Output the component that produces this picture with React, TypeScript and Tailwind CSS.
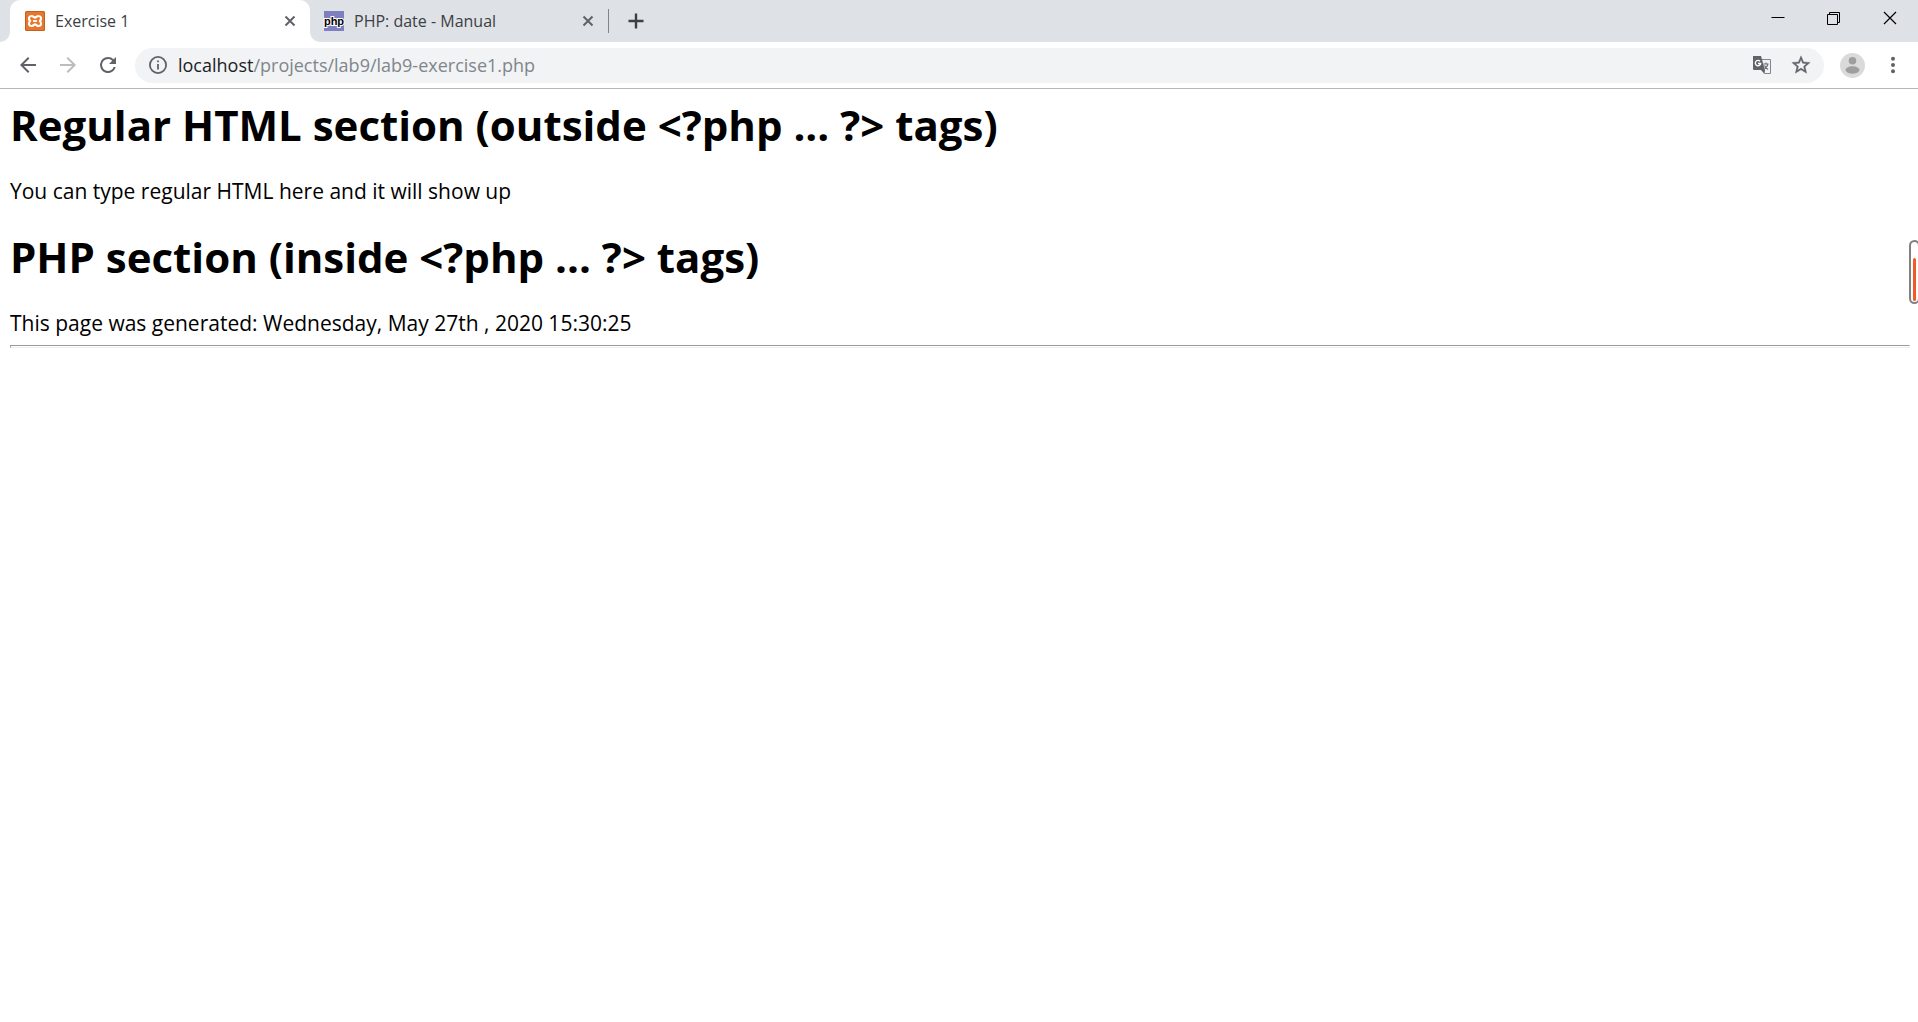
import type { ReactNode } from "react";

type IconProps = { className: string; children: ReactNode; box?: string };

function Icon({ className, children, box = "0 0 24 24" }: IconProps) {
  return (
    <svg viewBox={box} className={className} fill="currentColor" aria-hidden="true">
      {children}
    </svg>
  );
}

function IconButton({ label, className, children }: { label: string; className: string; children: ReactNode }) {
  return (
    <button type="button" aria-label={label} className={`flex shrink-0 items-center justify-center ${className}`}>
      {children}
    </button>
  );
}

function XamppIcon() {
  return (
    <svg viewBox="0 0 20 20" className="size-5 shrink-0" aria-hidden="true">
      <rect width="20" height="20" rx="1.5" fill="#c4601f" />
      <rect x="1" y="1" width="18" height="18" rx="1" fill="#e8762c" />
      <path
        d="M5.200 10C3 8 3.800 5 6.500 5c1.800 0 2.300 1.600 3.500 1.600S11.700 5 13.500 5c2.700 0 3.500 3 1.300 5 2.200 2 1.400 5-1.300 5-1.800 0-2.300-1.600-3.500-1.600S8.300 15 6.500 15C3.800 15 3 12 5.200 10Z"
        fill="none"
        stroke="#fff"
        strokeWidth="2.200"
        strokeLinejoin="round"
      />
      <path d="M8 10h4" stroke="#fff" strokeWidth="1.800" />
    </svg>
  );
}

function PhpIcon() {
  return (
    <svg viewBox="0 0 20 20" className="size-5 shrink-0 overflow-visible" aria-hidden="true">
      <rect width="20" height="20" fill="#7f7fbf" />
      <text
        x="10"
        y="14"
        textAnchor="middle"
        className="font-['Liberation_Sans'] text-[11px] font-bold"
        fill="#000"
        stroke="#fff"
        strokeWidth="2"
        paintOrder="stroke"
      >
        php
      </text>
    </svg>
  );
}

function CloseIcon() {
  return (
    <Icon className="size-4" box="0 0 16 16">
      <path d="M3.500 3.500 12.500 12.500M12.500 3.500 3.500 12.500" stroke="currentColor" strokeWidth="2" />
    </Icon>
  );
}

function TabStrip() {
  return (
    <header className="flex h-[42px] bg-[#dee1e6] text-[#3c4043]">
      <div className="flex w-[10px] bg-white">
        <div className="flex-1 rounded-br-[10px] bg-[#dee1e6]" />
      </div>
      <div role="tablist" aria-label="Open tabs" className="flex">
        <div className="flex w-[300px] items-center rounded-t-[10px] bg-white pr-3 pl-[15px]">
          <button type="button" role="tab" aria-selected="true" className="flex flex-1 items-center gap-[10px] text-base">
            <XamppIcon />
            Exercise 1
          </button>
          <IconButton label="Close Exercise 1" className="size-4 text-[#5f6368]">
            <CloseIcon />
          </IconButton>
        </div>
        <div className="flex w-[298px] bg-white">
          <div className="flex flex-1 items-center rounded-bl-[10px] bg-[#dee1e6] pr-3 pl-[14px]">
            <button type="button" role="tab" aria-selected="false" className="flex flex-1 items-center gap-[10px] text-base">
              <PhpIcon />
              PHP: date - Manual
            </button>
            <IconButton label="Close PHP: date - Manual" className="size-4 text-[#5f6368]">
              <CloseIcon />
            </IconButton>
          </div>
        </div>
      </div>
      <div className="my-[9px] w-px bg-[#808488]" />
      <IconButton label="New tab" className="ml-[15px] w-6">
        <Icon className="size-6">
          <path d="M12 4.500v15M4.500 12h15" stroke="currentColor" strokeWidth="2.400" />
        </Icon>
      </IconButton>
      <div className="flex-1" />
      <IconButton label="Minimize" className="h-9 w-14 text-black">
        <Icon className="size-4" box="0 0 16 16">
          <path d="M1.500 7h13v1h-13z" />
        </Icon>
      </IconButton>
      <IconButton label="Restore" className="h-9 w-14 text-black">
        <Icon className="size-4" box="0 0 16 16">
          <path d="M1.500 4.500h10v10h-10zM3.500 4.500v-2h10v10h-2" fill="none" stroke="currentColor" />
        </Icon>
      </IconButton>
      <IconButton label="Close window" className="h-9 w-14 text-black">
        <Icon className="size-4" box="0 0 16 16">
          <path d="m2 2 12 12M14 2 2 14" stroke="currentColor" strokeWidth="1.200" />
        </Icon>
      </IconButton>
    </header>
  );
}

function Toolbar() {
  return (
    <nav aria-label="Browser toolbar" className="flex h-[47px] items-center border-b border-[#b6b6b6] bg-white pr-[13px] pl-4 text-[#5f6368]">
      <IconButton label="Back" className="size-6">
        <Icon className="size-6">
          <path d="M20 11H7.830l5.590-5.590L12 4l-8 8 8 8 1.410-1.410L7.830 13H20z" />
        </Icon>
      </IconButton>
      <IconButton label="Forward" className="ml-4 size-6 text-[#babcbe]">
        <Icon className="size-6">
          <path d="m12 4-1.410 1.410L16.170 11H4v2h12.170l-5.580 5.590L12 20l8-8z" />
        </Icon>
      </IconButton>
      <IconButton label="Reload" className="ml-4 size-6">
        <Icon className="size-6">
          <path d="M17.650 6.350A7.958 7.958 0 0 0 12 4a8 8 0 1 0 7.730 10h-2.080A6 6 0 1 1 12 6c1.660 0 3.140.69 4.220 1.780L13 11h7V4z" />
        </Icon>
      </IconButton>
      <div className="ml-[15px] flex h-[35px] flex-1 items-center rounded-full bg-[#f1f3f4] pr-3 pl-[14px]">
        <IconButton label="Site information" className="size-[18px]">
          <Icon className="size-[18px]" box="2 2 20 20">
            <path d="M11 7h2v2h-2zm0 4h2v6h-2zm1-9a10 10 0 1 0 0 20 10 10 0 0 0 0-20m0 18a8 8 0 1 1 0-16 8 8 0 0 1 0 16" />
          </Icon>
        </IconButton>
        <a href="#address" className="ml-[11px] flex-1 text-[18px] text-[#80868b]">
          <span className="text-[#202124]">localhost</span>/projects/lab9/lab9-exercise1.php
        </a>
        <IconButton label="Translate this page" className="size-5">
          <svg viewBox="0 0 20 20" className="size-5" aria-hidden="true">
            <path d="M8 4.500h10.500v14h-6" fill="none" stroke="#80868b" />
            <path d="M1 1h8l4 14H2a1 1 0 0 1-1-1z" fill="#5f6368" />
            <path d="m9 15 3.500 4 .5-4z" fill="#5f6368" />
            <path d="M8 6.200A2.700 2.700 0 1 0 8.700 8.500H6" fill="none" stroke="#fff" strokeWidth="1.400" />
            <path d="M11.500 9h5M14 7.500V9m2 0c-.5 2-1.800 3.500-3.200 4.500M12.500 10.500c.8 1.700 2 2.900 3.500 4" fill="none" stroke="#6b6f73" strokeWidth="1.100" />
          </svg>
        </IconButton>
        <IconButton label="Bookmark this page" className="ml-[18px] size-[22px]">
          <Icon className="size-[22px]">
            <path
              d="m22 9.240-7.190-.62L12 2 9.190 8.630 2 9.240l5.460 4.730L5.820 21 12 17.270 18.180 21l-1.630-7.030zM12 15.400l-3.760 2.270 1-4.280-3.320-2.880 4.380-.38L12 6.100l1.710 4.040 4.380.38-3.320 2.880 1 4.280z"
              stroke="currentColor"
              strokeWidth="0.400"
            />
          </Icon>
        </IconButton>
      </div>
      <IconButton label="Profile" className="ml-4 size-[25px]">
        <svg viewBox="0 0 25 25" className="size-[25px]" aria-hidden="true">
          <circle cx="12.500" cy="12.500" r="12.500" fill="#dadada" />
          <circle cx="12.500" cy="7.800" r="3.800" fill="#9e9e9e" />
          <path d="M5.500 17.500c0-2.500 3-4.200 7-4.200s7 1.700 7 4.200c-1.500 2.200-4 3.300-7 3.300s-5.500-1.100-7-3.300" fill="#9e9e9e" />
        </svg>
      </IconButton>
      <IconButton label="Menu" className="ml-4 size-6">
        <Icon className="size-6">
          <circle cx="12" cy="5.700" r="2" />
          <circle cx="12" cy="12" r="2" />
          <circle cx="12" cy="18.300" r="2" />
        </Icon>
      </IconButton>
    </nav>
  );
}

function LevelGauge() {
  return (
    <div className="absolute top-[151px] right-0 h-16 w-[9px] overflow-hidden">
      <div className="flex h-16 w-[11px] items-end rounded-full border-2 border-[#808080] bg-white px-[2px] pb-px">
        <div className="h-[43px] w-full rounded-full bg-[#f05a28]" />
      </div>
    </div>
  );
}

export default function App() {
  return (
    <div className="min-h-screen bg-white font-['Open_Sans',sans-serif]">
      <TabStrip />
      <Toolbar />
      <main className="relative pt-2 pr-2 pl-[10px] text-black">
        <h1 className="text-[42px] leading-[56px] font-bold">Regular HTML section (outside &lt;?php ... ?&gt; tags)</h1>
        <p className="mt-6 text-[21px] leading-7">You can type regular HTML here and it will show up</p>
        <h1 className="mt-6 text-[42px] leading-[56px] font-bold">PHP section (inside &lt;?php ... ?&gt; tags)</h1>
        <p className="mt-6 text-[21px] leading-7">This page was generated: Wednesday, May 27th , 2020 15:30:25</p>
        <hr className="mt-2 h-[3px] border border-[#eeeeee] border-t-[#9a9a9a] border-l-[#9a9a9a]" />
        <LevelGauge />
      </main>
    </div>
  );
}
